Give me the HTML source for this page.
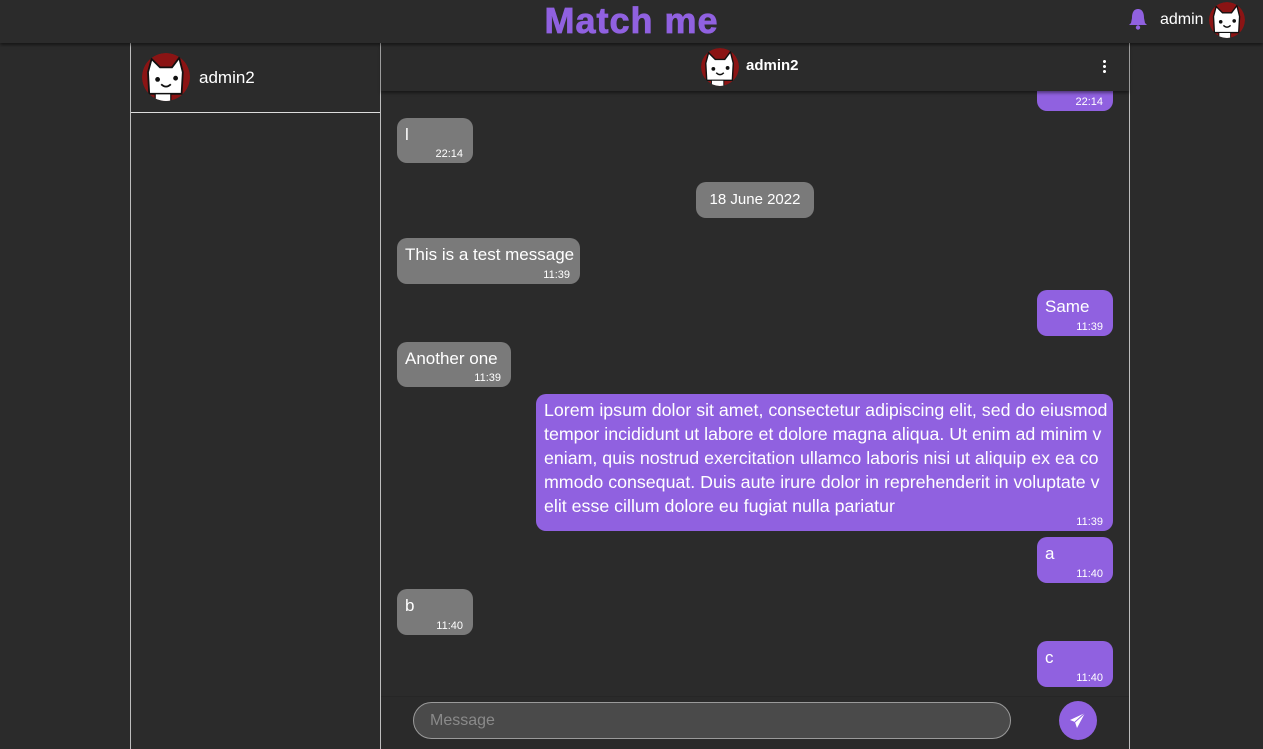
<!DOCTYPE html>
<html><head><meta charset="utf-8"><style>
*{margin:0;padding:0;box-sizing:border-box}
body{width:1263px;height:749px;background:#2b2b2b;font-family:"Liberation Sans",sans-serif;color:#fff;position:relative;overflow:hidden}
.top{position:absolute;left:0;top:0;width:1263px;height:43px;background:#2b2b2b;box-shadow:0 2px 3px rgba(0,0,0,.5);z-index:3}
.title{position:absolute;left:0;width:1263px;top:0px;text-align:center;font-size:36px;letter-spacing:1px;font-weight:bold;color:#9061e0;-webkit-text-stroke:0.8px #9061e0}
.vl{position:absolute;top:43px;bottom:0;width:1px;background:#bdbdbd}
.chh{position:absolute;left:381px;top:43px;width:748px;height:48px;background:#2b2b2b;box-shadow:0 2px 3px rgba(0,0,0,.45);z-index:2}
.b{position:absolute;border-radius:10px;padding:5px 8px;font-size:17px;line-height:24px;white-space:nowrap}
.g{background:#7a7a7a}.p{background:#9061e0}
.t{position:absolute;right:10px;bottom:3px;font-size:11px;line-height:12px}
.av{position:absolute}
</style></head><body>
<svg width="0" height="0" style="position:absolute"><defs>
<clipPath id="cc"><circle cx="20" cy="20" r="20"/></clipPath>
<g id="cat"><g clip-path="url(#cc)"><circle cx="20" cy="20" r="20" fill="#8b1414"/><path d="M6 34 L5 16 L8 5 L15 12 L25 12 L31 4 L34 16 L33 34 Z" fill="#fff" stroke="#111" stroke-width="1.5"/><path d="M11 34 L11 42 L24 42 L24 34Z" fill="#fff" stroke="#111" stroke-width="1"/><circle cx="13" cy="22" r="2" fill="#111"/><circle cx="28" cy="21" r="2" fill="#111"/><path d="M16 26 Q20 30 24 26" stroke="#111" stroke-width="1.5" fill="none"/></g></g>
</defs></svg>
<div class="top"><div class="title">Match me</div>
<svg style="position:absolute;left:1128px;top:8px" width="20" height="22" viewBox="0 0 20 22"><path d="M10 1 C5 1 4 6 4 10 L3 15 L1 17 L19 17 L17 15 L16 10 C16 6 15 1 10 1Z" fill="#9061e0"/><circle cx="10" cy="19.5" r="2.2" fill="#9061e0"/></svg>
<div style="position:absolute;left:1160px;top:11px;font-size:16px">admin</div>
<svg class="av" style="left:1209px;top:2px" width="36" height="36" viewBox="0 0 40 40"><use href="#cat"/></svg>
</div>
<div class="vl" style="left:130px"></div><div class="vl" style="left:380px"></div><div class="vl" style="left:1129px"></div>
<svg class="av" style="left:142px;top:53px" width="48" height="48" viewBox="0 0 40 40"><use href="#cat"/></svg>
<div style="position:absolute;left:199px;top:68px;font-size:17px">admin2</div>
<div style="position:absolute;left:131px;top:112px;width:249px;height:1px;background:#ddd"></div>
<div class="chh">
<svg class="av" style="left:320px;top:5px" width="38" height="38" viewBox="0 0 40 40"><use href="#cat"/></svg>
<div style="position:absolute;left:365px;top:14px;font-size:15px;font-weight:bold">admin2</div>
<div style="position:absolute;left:722px;top:16px;width:3px;height:15px;background:radial-gradient(circle,#fff 1.4px,transparent 1.6px) 0 0/3px 5px"></div>
</div>
<div class="b p" style="left:1037px;top:70px;width:76px;height:41px"><span class="t">22:14</span></div>
<div class="b g" style="left:397px;top:118px;width:76px;height:45px">l<span class="t">22:14</span></div>
<div style="position:absolute;left:696px;top:182px;width:118px;height:36px;border-radius:10px;background:#7a7a7a;font-size:15px;line-height:36px;text-align:center">18 June 2022</div>
<div class="b g" style="left:397px;top:238px;width:183px;height:46px">This is a test message<span class="t">11:39</span></div>
<div class="b p" style="left:1037px;top:290px;width:76px;height:46px">Same<span class="t">11:39</span></div>
<div class="b g" style="left:397px;top:342px;width:114px;height:45px">Another one<span class="t">11:39</span></div>
<div class="b p" style="left:536px;top:394px;width:577px;height:137px;font-size:17.8px;padding-top:4px">Lorem ipsum dolor sit amet, consectetur adipiscing elit, sed do eiusmod<br>tempor incididunt ut labore et dolore magna aliqua. Ut enim ad minim v<br>eniam, quis nostrud exercitation ullamco laboris nisi ut aliquip ex ea co<br>mmodo consequat. Duis aute irure dolor in reprehenderit in voluptate v<br>elit esse cillum dolore eu fugiat nulla pariatur<span class="t">11:39</span></div>
<div class="b p" style="left:1037px;top:537px;width:76px;height:46px">a<span class="t">11:40</span></div>
<div class="b g" style="left:397px;top:589px;width:76px;height:46px">b<span class="t">11:40</span></div>
<div class="b p" style="left:1037px;top:641px;width:76px;height:46px">c<span class="t">11:40</span></div>
<div style="position:absolute;left:381px;top:696px;width:748px;height:53px;background:#2a2a2a;border-top:1px solid #262626"></div>
<div style="position:absolute;left:413px;top:702px;width:598px;height:37px;border-radius:19px;background:#4a4a4a;border:1px solid #9a9a9a;color:#8a8a8a;font-size:16px;line-height:35px;padding-left:16px">Message</div>
<div style="position:absolute;left:1059px;top:701px;width:38px;height:39px;border-radius:50%;background:#9061e0"></div>
<svg style="position:absolute;left:1068px;top:711px" width="20" height="20" viewBox="0 0 20 20"><path d="M17 2 L2 9 L7 11 L9 17 Z" fill="#fff"/><path d="M17 2 L7 11" stroke="#9061e0" stroke-width="1"/></svg>
</body></html>
